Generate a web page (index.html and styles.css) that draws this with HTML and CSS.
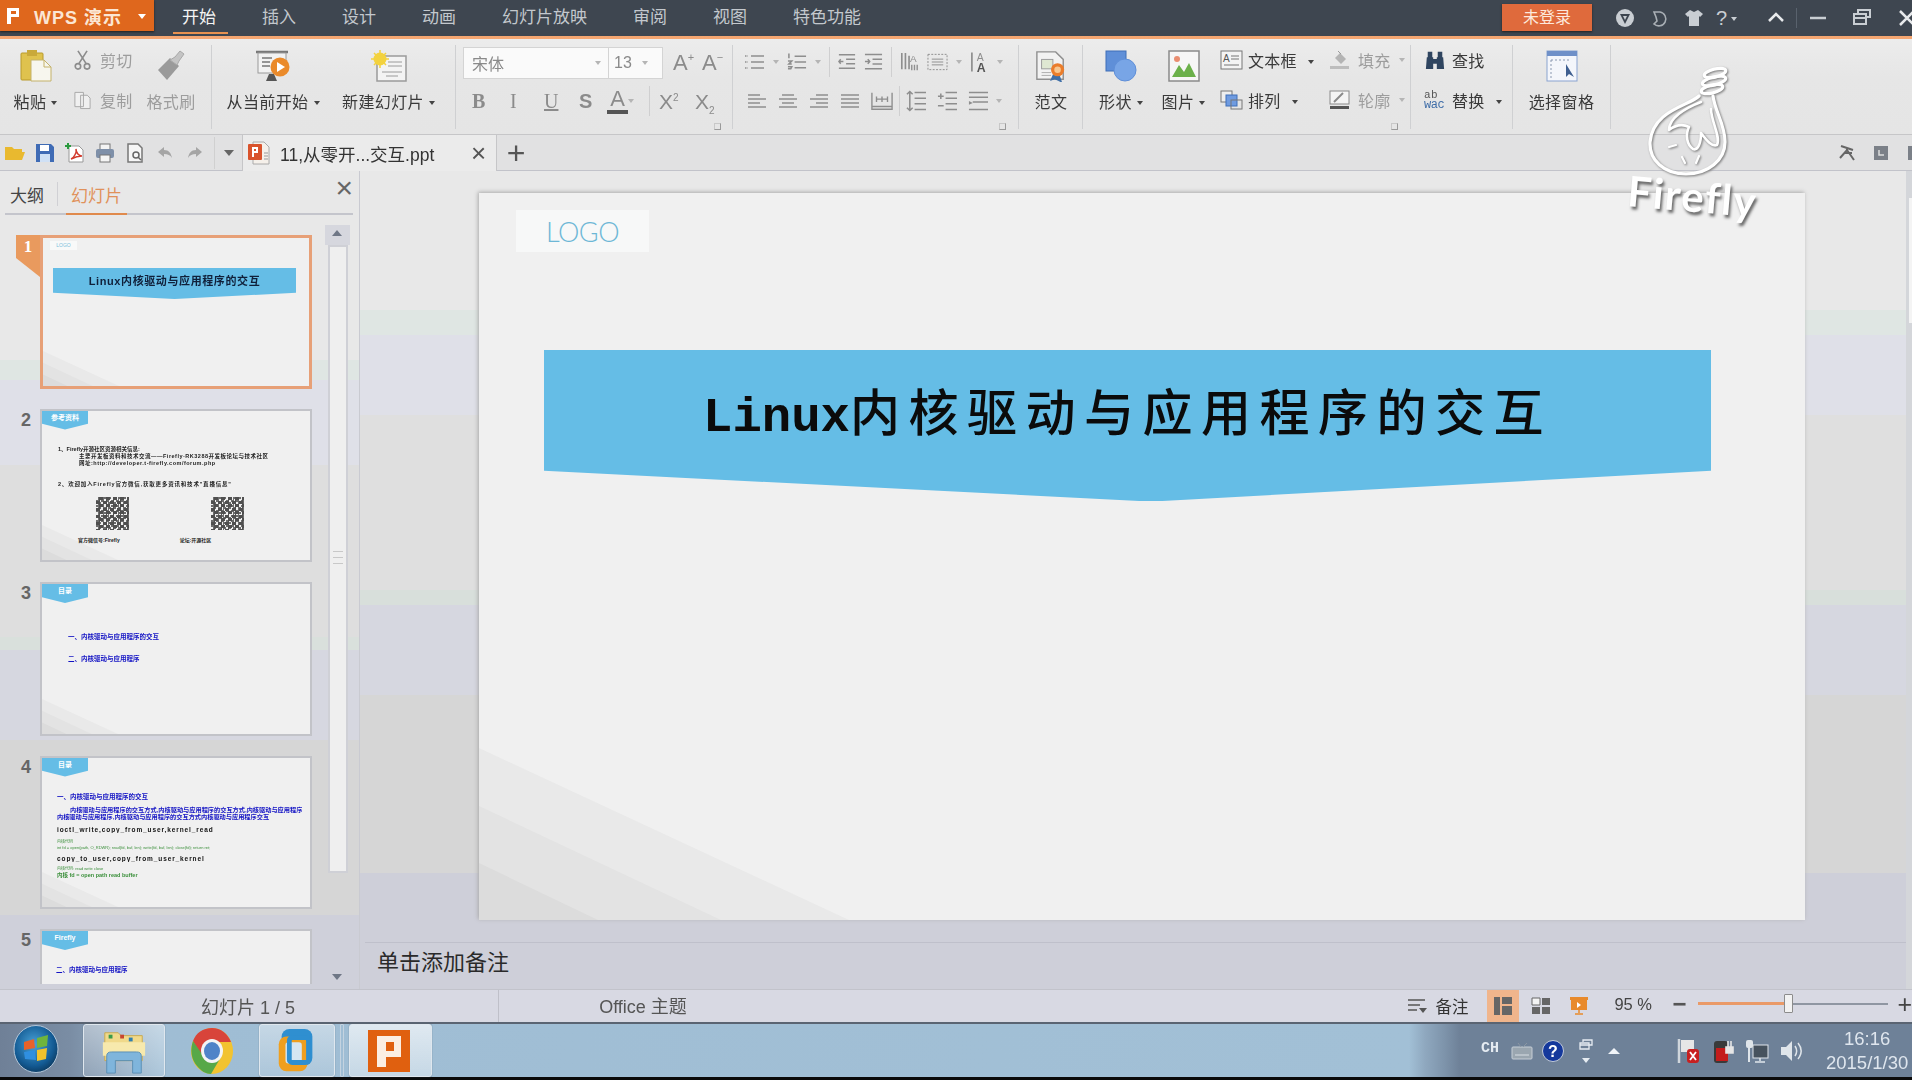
FILE: index.html
```html
<!DOCTYPE html>
<html lang="zh-CN">
<head>
<meta charset="utf-8">
<title>WPS 演示</title>
<link rel="stylesheet" href="styles.css">
</head>
<body>
<svg class="defs" aria-hidden="true">
  <symbol id="list" viewBox="0 0 21 20"><g fill="none" stroke="currentColor" stroke-width="1.6"><path d="M7 4h13M7 10h13M7 16h13"/><path d="M1 4h3M1 10h3M1 16h3" stroke-dasharray="1.5 1"/></g></symbol>
  <symbol id="num" viewBox="0 0 21 20"><g fill="none" stroke="currentColor" stroke-width="1.6"><path d="M8 4h12M8 10h12M8 16h12M2 1v5M1 9h4l-3 3h3M1 15h4l-1 2h-3"/></g></symbol>
  <symbol id="outd" viewBox="0 0 20 20"><path d="M1 2h18M9 7h10M9 12h10M1 17h18M1 9.500h5M3 7l-2 2.500 2 2.500" fill="none" stroke="currentColor" stroke-width="1.6"/></symbol>
  <symbol id="ind" viewBox="0 0 20 20"><path d="M1 2h18M9 7h10M9 12h10M1 17h18M1 9.500h5M4 7l2 2.500-2 2.500" fill="none" stroke="currentColor" stroke-width="1.6"/></symbol>
  <symbol id="box" viewBox="0 0 22 20"><rect x="1" y="2" width="20" height="16" fill="none" stroke="currentColor" stroke-dasharray="2 1.500"/><path d="M5 7h12M5 10h12M5 13h12" stroke="currentColor"/></symbol>
  <symbol id="al" viewBox="0 0 20 16"><path d="M1 2h12M1 6h18M1 10h12M1 14h18" stroke="currentColor" stroke-width="1.6"/></symbol>
  <symbol id="ac" viewBox="0 0 20 16"><path d="M4 2h12M1 6h18M4 10h12M1 14h18" stroke="currentColor" stroke-width="1.6"/></symbol>
  <symbol id="ar" viewBox="0 0 20 16"><path d="M7 2h12M1 6h18M7 10h12M1 14h18" stroke="currentColor" stroke-width="1.6"/></symbol>
  <symbol id="aj" viewBox="0 0 20 16"><path d="M1 2h18M1 6h18M1 10h18M1 14h18" stroke="currentColor" stroke-width="1.6"/></symbol>
  <symbol id="ad" viewBox="0 0 24 20"><path d="M1 1v18h22V1M1 16h22M6 8h12M6 5v6M12 5v6M18 5v6" fill="none" stroke="currentColor" stroke-width="1.5"/></symbol>
  <symbol id="ls" viewBox="0 0 21 24"><path d="M9 3h12M9 9h12M9 15h12M9 21h12M4 2v20M1 5l3-3 3 3M1 19l3 3 3-3" fill="none" stroke="currentColor" stroke-width="1.6"/></symbol>
  <symbol id="ls2" viewBox="0 0 21 24"><path d="M9 3h12M9 9h12M9 15h12M9 21h12M1 7h6M4 4v6M1 17h6" fill="none" stroke="currentColor" stroke-width="1.6"/></symbol>
  <symbol id="ls3" viewBox="0 0 21 24"><path d="M1 3h20M1 8h20M5 13h16M1 21h20" fill="none" stroke="currentColor" stroke-width="1.6"/><path d="M1 12l4 2-4 2z" fill="currentColor"/></symbol>
  <symbol id="deco" viewBox="0 0 370 172" preserveAspectRatio="none"><path d="M0 0L370 172H0z" fill="#e9e9e9"/><path d="M0 58L242 172H0z" fill="#e3e3e3"/><path d="M0 115L119 172H0z" fill="#dcdcdc"/></symbol>
</svg>

<div class="page">
  <header class="titlebar">
    <div class="app"><svg class="app-p" viewBox="0 0 14 18"><path d="M1 1h12v9H5v7H1zM5 4v3h5V4z" fill="#fff"/></svg><span class="app-name">WPS 演示</span><span class="app-arrow"></span></div>
    <nav class="tabs">
      <span class="tab on">开始</span><span class="tab">插入</span><span class="tab">设计</span><span class="tab">动画</span><span class="tab">幻灯片放映</span><span class="tab">审阅</span><span class="tab">视图</span><span class="tab">特色功能</span>
    </nav>
    <div class="win">
      <span class="login">未登录</span>
      <svg class="wi w1" viewBox="0 0 20 20"><circle cx="10" cy="10" r="9" fill="#c9ced3"/><path d="M5 6h10l-5 10z" fill="#3e4650"/><path d="M8 8h4l-2 4z" fill="#c9ced3"/></svg>
      <svg class="wi w2" viewBox="0 0 20 20"><path d="M4 4h6a7 7 0 1 1-6 12l3-3-1-4z" fill="none" stroke="#a9afb5" stroke-width="1.600"/></svg>
      <svg class="wi w3" viewBox="0 0 20 20"><path d="M6 2l4 2 4-2 5 4-3 3-1-1v10H5V8L4 9 1 6z" fill="#c9ced3"/></svg>
      <span class="wq">?<i class="dn-w"></i></span>
      <svg class="wi w4" viewBox="0 0 20 20"><path d="M3 13l7-7 7 7" fill="none" stroke="#e8eaec" stroke-width="2.500"/></svg>
      <i class="wsep"></i>
      <svg class="wi w5" viewBox="0 0 20 20"><path d="M2 10h16" stroke="#c9ced3" stroke-width="2.500"/></svg>
      <svg class="wi w6" viewBox="0 0 20 20"><path d="M6 5V2h12v7h-4M2 6h12v10H2zM2 10h12" fill="none" stroke="#c9ced3" stroke-width="2"/></svg>
      <svg class="wi w7" viewBox="0 0 20 20"><path d="M3 3l14 14M17 3L3 17" stroke="#e8eaec" stroke-width="2.500"/></svg>
    </div>
  </header>

  <section class="ribbon">
    <div class="rg g1">
      <div class="big paste">
        <svg class="bi" viewBox="0 0 32 32"><rect x="1" y="3" width="22" height="27" rx="1" fill="#dfc24e" stroke="#b99a2b"/><rect x="7" y="0" width="10" height="6" fill="#c9a93a"/><path d="M11 10h13l7 7v14H11z" fill="#f7f6ee" stroke="#c4b26a"/><path d="M24 10v7h7" fill="none" stroke="#c4b26a"/></svg>
        <span class="lb">粘贴<i class="dn"></i></span>
      </div>
      <div class="stack cut">
        <span class="sm off"><svg class="si" viewBox="0 0 20 22"><path d="M5 1l9 14M15 1L6 15" stroke="#8c8c8c" stroke-width="1.800"/><circle cx="5" cy="18" r="3" fill="none" stroke="#8c8c8c" stroke-width="1.800"/><circle cx="15" cy="18" r="3" fill="none" stroke="#8c8c8c" stroke-width="1.800"/></svg>剪切</span>
        <span class="sm off"><svg class="si" viewBox="0 0 20 20"><path d="M2 2h9v15H2zM8 5h7l3 3v11H8z" fill="#f0f0f0" stroke="#a8a8a8"/></svg>复制</span>
      </div>
      <div class="big brush off">
        <svg class="bi" viewBox="0 0 32 32"><path d="M3 20l12-12 9 8-12 14z" fill="#9a9a9a"/><path d="M15 10l5-3 5-6 4 3-5 7-2 4z" fill="#c4c4c4" stroke="#a8a8a8"/></svg>
        <span class="lb">格式刷</span>
      </div>
    </div>

    <div class="rg g2">
      <div class="big w96">
        <svg class="bi wide" viewBox="0 0 36 32"><path d="M1 2h32" stroke="#777" stroke-width="2.500"/><rect x="3" y="3" width="28" height="20" fill="#f2f2f2" stroke="#9a9a9a"/><path d="M7 8h10M7 12h8M7 16h8" stroke="#777" stroke-width="1.500"/><path d="M14 24l-3 7h11l-3-7z" fill="#555"/><circle cx="25" cy="17" r="9.500" fill="#ea8a2a"/><path d="M22 12l8 5-8 5z" fill="#fff"/></svg>
        <span class="lb">从当前开始<i class="dn"></i></span>
      </div>
      <div class="big w99">
        <svg class="bi wide" viewBox="0 0 36 32"><rect x="6" y="6" width="29" height="25" fill="#f3f3f3" stroke="#9a9a9a" stroke-width="1.500"/><path d="M17 12h14M17 16h14M11 22h20M15 26h12" stroke="#9a9a9a"/><circle cx="9" cy="9" r="6.500" fill="#f3d23e"/><path d="M9 0v18M0 9h18M3 3l12 12M15 3L3 15" stroke="#f3d23e" stroke-width="1.500"/></svg>
        <span class="lb">新建幻灯片<i class="dn"></i></span>
      </div>
    </div>

    <div class="rg g3">
      <div class="frow r1">
        <div class="fontbox"><span class="fname">宋体</span><i class="dn lite a1"></i><span class="fsize">13</span><i class="dn lite a2"></i></div>
        <span class="aa a-up">A<sup>+</sup></span><span class="aa a-dn">A<sup>−</sup></span>
      </div>
      <div class="frow r2">
        <b class="fb s-b">B</b><i class="fb s-i">I</i><u class="fb s-u">U</u><span class="fb s-s">S</span>
        <span class="fb s-a">A</span><i class="dn lite a3"></i><i class="vs v1"></i>
        <span class="xx x1">X<sup>2</sup></span><span class="xx">X<sub>2</sub></span>
      </div>
      <i class="launch"></i>
    </div>

    <div class="rg g4">
      <div class="tools t1">
        <svg class="ti w21"><use href="#list"/></svg><i class="dn lite"></i>
        <svg class="ti w20"><use href="#num"/></svg><i class="dn lite"></i><i class="vs"></i>
        <svg class="ti w18"><use href="#outd"/></svg><svg class="ti w19"><use href="#ind"/></svg><i class="vs"></i>
        <svg class="ti w19" viewBox="0 0 21 22"><path d="M2 1v18M6 1v18M10 4v15" fill="none" stroke="currentColor" stroke-width="1.800"/><text x="11" y="11" class="svgt">A</text><path d="M13 14v6M16 14v6M19 14v6" fill="none" stroke="currentColor" stroke-width="1.500"/></svg><svg class="ti w21"><use href="#box"/></svg><i class="dn lite"></i>
        <svg class="ti w19 h24" viewBox="0 0 20 24"><path d="M2 2v20" stroke="currentColor" stroke-width="1.800"/><text x="7" y="11" class="svgt">A</text><text x="7" y="23" class="svgb">A</text></svg><i class="dn lite"></i>
      </div>
      <div class="tools t2">
        <svg class="ti w20 h16"><use href="#al"/></svg><svg class="ti w20 h16"><use href="#ac"/></svg><svg class="ti w20 h16"><use href="#ar"/></svg><svg class="ti w20 h16"><use href="#aj"/></svg><svg class="ti w22"><use href="#ad"/></svg>
        <i class="vs tight"></i>
        <svg class="ti w20 h24 tight"><use href="#ls"/></svg><svg class="ti w20 h24"><use href="#ls2"/></svg><svg class="ti w20 h24"><use href="#ls3"/></svg><i class="dn lite"></i>
      </div>
      <i class="launch"></i>
    </div>

    <div class="rg g5">
      <div class="big w64">
        <svg class="bi" viewBox="0 0 32 34"><path d="M1 2h20l8 8v21H1z" fill="#f2f2f2" stroke="#8f8f8f" stroke-width="1.500"/><rect x="6" y="10" width="12" height="10" fill="#dfe8d2" stroke="#9a9a9a"/><path d="M6 24h10M6 27h10" stroke="#aaa"/><path d="M18 26l-3 7 5-2 4 2 4 2-3-9z" fill="#3f6fa8"/><circle cx="23" cy="21" r="7" fill="#ea7d2b"/><circle cx="23" cy="21" r="3.500" fill="#f7c78f"/></svg>
        <span class="lb">范文</span>
      </div>
    </div>

    <div class="rg g6">
      <div class="big w48">
        <svg class="bi" viewBox="0 0 32 32"><rect x="1" y="1" width="20" height="20" fill="#5f8fd8" stroke="#3f6fb8"/><circle cx="20" cy="20" r="11" fill="#78a5e6" stroke="#5f8fd8"/></svg>
        <span class="lb">形状<i class="dn"></i></span>
      </div>
      <div class="big w49">
        <svg class="bi" viewBox="0 0 32 32"><rect x="1" y="1" width="30" height="30" fill="#f6f6f6" stroke="#8a8a8a" stroke-width="1.500"/><circle cx="9" cy="9" r="3" fill="#e98d70"/><path d="M4 27l7-12 5 7 5-9 7 14z" fill="#6bb04a"/></svg>
        <span class="lb">图片<i class="dn"></i></span>
      </div>
      <div class="stack c95">
        <span class="sm g5px"><svg class="si s23" viewBox="0 0 23 20"><rect x="1" y="1" width="21" height="18" fill="#f4f4f4" stroke="#777"/><text x="3" y="12" class="svgs">A</text><path d="M11 6h8M11 9h8M4 15h15" stroke="#777"/></svg>文本框<i class="dn arrow10"></i></span>
        <span class="sm g5px"><svg class="si s23" viewBox="0 0 23 20"><rect x="1" y="1" width="11" height="11" fill="#eee" stroke="#777"/><rect x="6" y="5" width="11" height="11" fill="#6f9be0" stroke="#3f6fb8"/><rect x="11" y="10" width="11" height="9" fill="none" stroke="#777"/></svg>排列<i class="dn arrow10"></i></span>
      </div>
      <div class="stack off">
        <span class="sm g8px"><svg class="si s21" viewBox="0 0 21 20"><path d="M6 8l5-5 6 6-5 5z" fill="#b4b4b4"/><path d="M9 1l3 3" stroke="#999"/><rect x="1" y="16" width="19" height="3" fill="#bdbdbd"/></svg>填充<i class="dn lite arrow10"></i></span>
        <span class="sm g8px"><svg class="si s21" viewBox="0 0 21 20"><rect x="1" y="1" width="19" height="13" fill="#f4f4f4" stroke="#8a8a8a"/><path d="M5 12l9-9" stroke="#8a8a8a" stroke-width="2"/><rect x="1" y="16" width="19" height="3" fill="#555"/></svg>轮廓<i class="dn lite arrow10"></i></span>
      </div>
      <i class="launch"></i>
    </div>

    <div class="rg g7">
      <div class="stack">
        <span class="sm g6px"><svg class="si s22" viewBox="0 0 22 22"><path d="M2 8h7v13H1zM13 8h7l1 13h-8zM3 2h5v6H3zM14 2h5v6h-5zM9 10h4v5H9z" fill="#2f4560"/></svg>查找</span>
        <span class="sm g6px"><span class="abwac"><span class="ab">ab</span><span class="wac">wac</span></span>替换<i class="dn"></i></span>
      </div>
    </div>

    <div class="rg g8">
      <div class="big w69">
        <svg class="bi" viewBox="0 0 32 32"><rect x="1" y="1" width="30" height="30" fill="#f4f6fb" stroke="#8aa3d0"/><rect x="1" y="1" width="30" height="5" fill="#6f90c8"/><path d="M5 10h20M5 10v18" stroke="#8a98b0" stroke-dasharray="2 2"/><path d="M20 14v13l3-3 5 3z" fill="#3f5f90"/></svg>
        <span class="lb">选择窗格</span>
      </div>
    </div>
  </section>

  <section class="quick">
    <div class="qicons">
      <svg class="qi" viewBox="0 0 20 20"><path d="M0 4h7l2 2h8v3H0zM0 9h20l-3 8H0z" fill="#e9b92f"/></svg>
      <svg class="qi" viewBox="0 0 20 20"><path d="M1 1h15l3 3v15H1z" fill="#3f6bb5"/><rect x="5" y="2" width="9" height="6" fill="#fff"/><rect x="5" y="11" width="10" height="8" fill="#cfe0f5"/></svg>
      <svg class="qi" viewBox="0 0 20 20"><path d="M4 3h10l4 4v12H4z" fill="#fff" stroke="#999"/><path d="M6 16c3-1 6-7 5-10 0 4 3 7 6 7-4 0-7 1-11 3z" fill="none" stroke="#d23b2e" stroke-width="1.500"/><path d="M3 0v6M0 3h6" stroke="#2a9a3e" stroke-width="2"/></svg>
      <svg class="qi" viewBox="0 0 20 20"><rect x="5" y="1" width="10" height="6" fill="#f4f4f4" stroke="#777"/><rect x="1" y="6" width="18" height="9" rx="2" fill="#7e8fa8"/><rect x="5" y="12" width="10" height="7" fill="#f4f4f4" stroke="#777"/></svg>
      <svg class="qi" viewBox="0 0 20 20"><path d="M3 1h10l4 4v14H3z" fill="#f6f6f6" stroke="#777" stroke-width="1.500"/><circle cx="11" cy="12" r="3" fill="none" stroke="#666" stroke-width="1.500"/><path d="M13 14l3 3" stroke="#666" stroke-width="1.500"/></svg>
      <svg class="qi" viewBox="0 0 20 20"><path d="M9 4L3 9l6 5v-3c4 0 6 1 8 4-1-5-3-8-8-8z" fill="#a5a5a5"/></svg>
      <svg class="qi" viewBox="0 0 20 20"><path d="M11 4l6 5-6 5v-3c-4 0-6 1-8 4 1-5 3-8 8-8z" fill="#a5a5a5"/></svg>
    </div>
    <i class="qsep"></i>
    <i class="dn dark qdrop"></i>
    <div class="doc">
      <svg class="docic" viewBox="0 0 22 24"><path d="M5 1h11l5 5v17H5z" fill="#f5f0ea" stroke="#aaa"/><rect x="0" y="3" width="14" height="16" rx="1" fill="#d9532c"/><path d="M4 6h6v6H6v4H4zM6 8v2h2V8z" fill="#fff"/><path d="M16 12h4M16 15h4M16 18h4" stroke="#999"/></svg>
      <span class="docname">11,从零开...交互.ppt</span>
      <span class="docx">×</span>
    </div>
    <span class="plus">+</span>
    <div class="qright">
      <svg class="qr" viewBox="0 0 18 18"><path d="M3 2l12 4M9 4v3M2 14l7-8 7 10M6 9h8" fill="none" stroke="#666" stroke-width="2"/></svg>
      <svg class="qr" viewBox="0 0 18 18"><rect x="2" y="2" width="14" height="14" fill="#7b8088"/><path d="M7 6v5h5" fill="none" stroke="#ddd" stroke-width="1.500"/></svg>
      <svg class="qr" viewBox="0 0 18 18"><rect x="2" y="2" width="14" height="14" fill="#7b8088"/></svg>
    </div>
  </section>

  <main class="work">
    <aside class="side">
      <div class="stabs"><span class="st">大纲</span><i class="stsep"></i><span class="st on">幻灯片</span><span class="sclose">×</span></div>
      <div class="sbody">
        <div class="thumbs">
          <div class="item">
            <span class="flag">1</span>
            <div class="thumb active">
              <span class="t-logo">LOGO</span>
              <div class="t-banner"><span>Linux内核驱动与应用程序的交互</span></div>
              <svg class="t-deco"><use href="#deco"/></svg>
            </div>
          </div>
          <div class="item">
            <span class="num">2</span>
            <div class="thumb">
              <span class="t-tag">参考资料</span>
              <p class="t-k k2a">1、Firefly开源社区资源相关信息:</p>
              <p class="t-k k2b">主要开发板资料和技术交流——Firefly-RK3288开发板论坛与技术社区</p>
              <p class="t-k k2b">网址:http://developer.t-firefly.com/forum.php</p>
              <p class="t-k k2c">2、欢迎加入Firefly官方微信,获取更多资讯和技术"直播信息"</p>
              <div class="qrs"><i class="qrc"></i><i class="qrc"></i></div>
              <div class="caps"><span>官方微信号:Firefly</span><span>论坛:开源社区</span></div>
              <svg class="t-deco"><use href="#deco"/></svg>
            </div>
          </div>
          <div class="item">
            <span class="num">3</span>
            <div class="thumb">
              <span class="t-tag">目录</span>
              <p class="t-b b3a">一、内核驱动与应用程序的交互</p>
              <p class="t-b b3b">二、内核驱动与应用程序</p>
              <svg class="t-deco"><use href="#deco"/></svg>
            </div>
          </div>
          <div class="item">
            <span class="num">4</span>
            <div class="thumb">
              <span class="t-tag">目录</span>
              <p class="t-b b4a">一、内核驱动与应用程序的交互</p>
              <p class="t-b b4b">内核驱动与应用程序的交互方式,内核驱动与应用程序的交互方式,内核驱动与应用程序</p>
              <p class="t-b b4c">内核驱动与应用程序,内核驱动与应用程序的交互方式内核驱动与应用程序交互</p>
              <p class="t-d b4d">ioctl_write,copy_from_user,kernel_read</p>
              <p class="t-g b4e">内核代码</p>
              <p class="t-g b4f">int fd = open(path, O_RDWR); read(fd, buf, len); write(fd, buf, len); close(fd); return ret;</p>
              <p class="t-d b4g">copy_to_user,copy_from_user_kernel</p>
              <p class="t-g b4f">内核代码: read write close</p>
              <p class="t-g b4h">内核 fd = open path read buffer</p>
              <svg class="t-deco"><use href="#deco"/></svg>
            </div>
          </div>
          <div class="item">
            <span class="num">5</span>
            <div class="thumb">
              <span class="t-tag">Firefly</span>
              <p class="t-b b5a">二、内核驱动与应用程序</p>
              <svg class="t-deco"><use href="#deco"/></svg>
            </div>
          </div>
        </div>
        <div class="vscroll">
          <i class="sc-up"></i>
          <div class="sc-thumb"><i class="grip"></i></div>
          <i class="sc-dn"></i>
        </div>
      </div>
    </aside>

    <div class="center">
      <div class="canvas">
        <article class="slide">
          <div class="logo"><span>LOGO</span></div>
          <div class="banner"><h1 class="headline"><span class="lat">Linux</span><span class="cjk">内核驱动与应用程序的交互</span></h1></div>
          <svg class="deco"><use href="#deco"/></svg>
        </article>
      </div>
      <div class="notes">单击添加备注</div>
    </div>

    <div class="rscroll"><i class="rthumb"></i></div>
  </main>

  <footer class="status">
    <span class="s-page">幻灯片 1 / 5</span>
    <span class="s-theme">Office 主题</span>
    <div class="s-right">
      <svg class="s-note" viewBox="0 0 20 18"><path d="M1 3h17M1 8h12M1 13h9" stroke="#555" stroke-width="1.500"/><path d="M12 11h8l-4 5z" fill="#555"/></svg>
      <span class="s-nt">备注</span>
      <span class="vbtn on"><svg viewBox="0 0 20 20"><path d="M1 1h6v18H1zM9 1h10v7H9zM9 10h10v9H9z" fill="#666"/></svg></span>
      <span class="vbtn"><svg viewBox="0 0 20 20"><path d="M1 2h8v7H1z" fill="#f4f4f4" stroke="#666"/><path d="M11 2h8v7h-8zM1 11h8v7H1zM11 11h8v7h-8z" fill="#666"/></svg></span>
      <span class="vbtn"><svg viewBox="0 0 20 20"><path d="M1 1h18v3h-1v10H2V4H1z" fill="#e88a2c"/><path d="M8 6l4 3-4 3z" fill="#fff"/><path d="M10 14v3M6 18h8" stroke="#e88a2c" stroke-width="1.500"/></svg></span>
      <span class="zoomv">95 %</span>
      <span class="zm">−</span>
      <div class="slider"><i class="fill"></i><i class="handle"></i></div>
      <span class="zp">+</span>
    </div>
  </footer>

  <div class="taskbar">
    <div class="orb"><svg viewBox="0 0 46 48"><defs><radialGradient id="og" cx=".45" cy=".4" r=".65"><stop offset="0" stop-color="#4aa3d8"/><stop offset=".7" stop-color="#135a93"/><stop offset="1" stop-color="#0b3558"/></radialGradient></defs><ellipse cx="23" cy="24" rx="22" ry="23.500" fill="url(#og)" stroke="#b4c6d8"/><path d="M11 17l10-3 1 9-11 2z" fill="#e8622a"/><path d="M24 13l11-3-1 11-10 2z" fill="#6fb53c"/><path d="M11 27l11-2 1 10-11-1z" fill="#2f8fe0"/><path d="M24 25l10-2-1 11-9 2z" fill="#f2c22c"/></svg></div>
    <div class="tb-btn open b-folder"><svg viewBox="0 0 46 50"><path d="M3 6h14l3 3h22v26H3z" fill="#f0d98a" stroke="#c8a94e"/><path d="M7 8h4v4H7z" fill="#3a9a4a"/><path d="M19 8h4v4h-4z" fill="#c8452e"/><path d="M28 11h4v4h-4z" fill="#2f7fb0"/><path d="M1 16h44v14H1z" fill="#f7e9ad"/><path d="M5 48V30c0-3 2-4 5-4h26c3 0 5 1 5 4v18h-9V35H14v13z" fill="#7fb5dc" stroke="#5a8fb5"/></svg></div>
    <div class="tb-btn b-chrome"><svg viewBox="0 0 44 48"><ellipse cx="22" cy="24" rx="21" ry="23" fill="#f2c330"/><path d="M22 1C13 1 6 6 3 14l10 18 9-17h19C38 7 31 1 22 1z" fill="#d8443a"/><path d="M3 14c-3 9-2 18 4 25 4 5 9 8 14 8l10-17-9 3c-5 0-8-2-10-6z" fill="#57a848"/><ellipse cx="22" cy="24" rx="11" ry="12" fill="#f4f4f4"/><ellipse cx="22" cy="24" rx="8" ry="9" fill="#4f83c8"/></svg></div>
    <div class="tb-btn open b-vm"><svg viewBox="0 0 40 50"><rect x="4" y="2" width="32" height="38" rx="8" fill="#2f8fd0"/><rect x="1" y="10" width="30" height="36" rx="8" fill="#ef9f1f"/><rect x="8" y="16" width="17" height="22" rx="3" fill="#d6e6f2"/><rect x="12" y="11" width="20" height="26" rx="3" fill="none" stroke="#2f8fd0" stroke-width="5"/></svg></div>
    <i class="tb-sep"></i>
    <div class="tb-btn open b-wps"><svg viewBox="0 0 42 42"><rect width="42" height="42" fill="#e0600f"/><path d="M9 6h24v21H18v10H9zM18 12v9h8v-9z" fill="#fbeee2"/></svg></div>
    <div class="tray">
      <span class="ch">CH</span>
      <svg class="tri t-kb" viewBox="0 0 22 20"><rect x="1" y="6" width="20" height="12" rx="1" fill="#9aa6b0" stroke="#c6ced6"/><path d="M4 14h14" stroke="#d8dee4"/><path d="M10 6l-3-4M12 6l4-4" stroke="#8a96a2"/></svg>
      <svg class="tri t-help" viewBox="0 0 22 22"><circle cx="11" cy="11" r="10.500" fill="#14389c" stroke="#c4ccd8"/><text x="11" y="17" class="svgq">?</text></svg>
      <span class="t-switch"><svg viewBox="0 0 14 12"><path d="M4 3V1h9v5h-3M1 4h9v6H1zM1 6h9" fill="none" stroke="#e6ecf2" stroke-width="1.300"/></svg><i class="t-dn"></i></span>
      <i class="t-up"></i>
      <svg class="tri t-flag" viewBox="0 0 24 26"><path d="M3 1v24" stroke="#d0d6dc" stroke-width="2.500"/><path d="M5 2h13v12H5z" fill="#e6e6e6"/><rect x="11" y="11" width="12" height="14" rx="3" fill="#c82020"/><path d="M14 14l6 8M20 14l-6 8" stroke="#fff" stroke-width="1.800"/></svg>
      <svg class="tri t-plug" viewBox="0 0 22 26"><rect x="2" y="3" width="14" height="22" rx="3" fill="#3a3a3a"/><rect x="4" y="10" width="12" height="13" fill="#c41c1c"/><path d="M14 9h7v6h-7zM16 3v6M19 3v6" stroke="#e6e6e6" stroke-width="1.600" fill="#e6e6e6"/></svg>
      <svg class="tri t-net" viewBox="0 0 24 26"><rect x="8" y="7" width="15" height="13" fill="#46525e" stroke="#e0e6ec"/><path d="M15 20v3M10 24h10" stroke="#e0e6ec" stroke-width="1.500"/><rect x="1" y="2" width="7" height="8" rx="2" fill="#dfe5ea"/><path d="M4 10v14" stroke="#dfe5ea" stroke-width="2"/></svg>
      <svg class="tri t-vol" viewBox="0 0 22 24"><path d="M1 8h5l6-6v20l-6-6H1z" fill="#dfe5ea"/><path d="M15 7c2 3 2 7 0 10M18 4c4 5 4 11 0 16" fill="none" stroke="#dfe5ea" stroke-width="1.500"/></svg>
      <div class="clock"><span>16:16</span><span>2015/1/30</span></div>
    </div>
  </div>

  <div class="firefly">
    <svg class="bulb" viewBox="0 0 140 120"><g fill="none" stroke="#fff" stroke-width="3.200" stroke-linecap="round" stroke-linejoin="round"><ellipse cx="90" cy="13" rx="11" ry="4" transform="rotate(-14 90 13)"/><ellipse cx="89" cy="21" rx="12" ry="4" transform="rotate(-14 89 21)"/><ellipse cx="87" cy="29" rx="11" ry="4" transform="rotate(-14 87 29)"/><path d="M74 36C64 46 28 50 25 82c-1 18 14 32 36 32 22 0 39-14 39-32 0-18-10-30-12-46"/><path d="M76 42c-16 6-32 16-32 28 8-6 14-6 20-3-4 8-2 18 4 22 5 2 8-6 8-16 6 8 11 14 16 12 4-8-6-24-6-36" stroke-width="2.600"/><path d="M44 87l7-2M57 97l3 6M74 96l-3 7" stroke-width="2.200"/></g></svg>
    <span class="ff-text">Firefly</span>
  </div>
</div>
</body>
</html>
```

FILE: styles.css
```css
* { box-sizing: border-box; }
html, body { margin: 0; padding: 0; background: #e6e6e6; }
body { width: 1912px; height: 1080px; overflow: hidden; font-family: "Liberation Sans", "Noto Sans CJK SC", sans-serif; color: #3a3a3a; }
p { margin: 0; }
i { font-style: normal; }
.defs { position: absolute; width: 0; height: 0; }
.svgt { font: 11px "Liberation Sans", sans-serif; fill: currentColor; }
.svgb { font: bold 13px "Liberation Sans", sans-serif; fill: #555; }
.svgs { font: 10px "Liberation Sans", sans-serif; fill: #555; }
.svgq { font: bold 16px "Liberation Sans", sans-serif; fill: #fff; text-anchor: middle; }

.page { position: relative; width: 1912px; height: 1080px; display: flex; flex-direction: column; overflow: hidden; filter: blur(.45px); }

/* title bar */
.titlebar { flex: 0 0 39px; display: flex; background: #3e4650; border-bottom: 3px solid; border-image: linear-gradient(#c9743c, #f6a772) 1; }
.app { width: 154px; height: 31px; background: #df671d; display: flex; align-items: center; padding-left: 6px; color: #fff; box-shadow: 0 1px 2px #222; flex: none; }
.app-p { width: 14px; height: 18px; }
.app-name { margin-left: 14px; font-size: 18px; font-weight: bold; color: #fbe6d4; letter-spacing: 1px; white-space: nowrap; }
.app-arrow { margin-left: 16px; border: 4px solid transparent; border-top: 5px solid #fff; margin-top: 5px; }
.tabs { display: flex; gap: 46px; padding-left: 28px; font-size: 17px; color: #c3c8cd; height: 36px; }
.tab { line-height: 36px; position: relative; white-space: nowrap; }
.tab.on { color: #f4f4f4; }
.tab.on::after { content: ""; position: absolute; left: -9px; right: -12px; bottom: 2px; height: 2px; background: #e8914f; }
.win { margin-left: auto; display: flex; align-items: center; height: 36px; width: 410px; flex: none; }
.login { width: 90px; height: 27px; background: #df6a3c; color: #fde9dc; font-size: 16px; text-align: center; line-height: 27px; box-shadow: 0 1px 2px #222; margin-bottom: 1px; flex: none; }
.wi { width: 20px; height: 20px; flex: none; }
.w1 { margin-left: 23px; }
.w2 { margin-left: 15px; }
.w3 { margin-left: 14px; }
.wq { margin-left: 12px; width: 24px; color: #c9ced3; font-size: 20px; display: flex; align-items: center; flex: none; }
.dn-w { margin-left: 4px; border: 3.500px solid transparent; border-top: 4px solid #c9ced3; margin-top: 5px; }
.w4 { margin-left: 26px; }
.wsep { margin-left: 10px; width: 1px; height: 20px; background: #59626d; flex: none; }
.w5 { margin-left: 11px; }
.w6 { margin-left: 24px; }
.w7 { margin-left: 25px; }

/* ribbon */
.ribbon { flex: 0 0 95px; display: flex; background: linear-gradient(#ececec, #e6e6e6 40%, #e5e5e5); }
.rg { position: relative; display: flex; height: 95px; padding-bottom: 6px; flex: none; }
.rg::after { content: ""; position: absolute; right: 0; top: 6px; bottom: 5px; width: 1px; background: #cfd0d2; }
.g1 { width: 212px; padding-left: 11px; }
.g2 { width: 244px; padding-left: 13px; gap: 18px; }
.g3 { width: 277px; flex-direction: column; padding-left: 7px; }
.g4 { width: 286px; flex-direction: column; }
.g5 { width: 64px; }
.g6 { width: 328px; padding-left: 14px; gap: 14px; }
.g7 { width: 102px; padding-left: 13px; }
.g8 { width: 98px; padding-left: 14px; }

.big { display: grid; grid-template-rows: 43px 38px; justify-items: center; align-items: end; font-size: 16px; }
.bi { width: 32px; height: 32px; display: block; }
.bi.wide { width: 36px; }
.lb { display: flex; align-items: center; height: 38px; white-space: nowrap; letter-spacing: .4px; }
.paste { width: 49px; }
.brush { width: 50px; margin-left: 12px; }
.off { color: #9d9d9d; }
.w96 { width: 96px; } .w99 { width: 99px; } .w64 { width: 64px; } .w48 { width: 48px; } .w49 { width: 49px; } .w69 { width: 69px; }
.g6 .stack.c95 { width: 95px; margin-left: -2px; }
.stack { display: grid; grid-template-rows: 41px 40px; font-size: 16px; align-items: center; }
.cut { margin-left: 13px; width: 61px; }
.sm { display: flex; align-items: center; gap: 8px; white-space: nowrap; letter-spacing: .3px; }
.si { width: 19px; height: 20px; flex: none; }
.s23 { width: 23px; } .s21 { width: 21px; } .s22 { width: 22px; }
.g5px { gap: 5px; } .g8px { gap: 8px; } .g6px { gap: 6px; }
.dn { display: inline-block; margin-left: 5px; margin-top: 4px; border: 3.500px solid transparent; border-top: 4px solid #444; border-bottom: 0; flex: none; }
.dn.lite { border-top-color: #b5b5b5; margin-left: 0; margin-top: 0; }
.arrow10 { margin-left: 6px; }
.abwac { display: flex; flex-direction: column; width: 22px; font: 11px/10px "Liberation Mono", monospace; color: #555; }
.wac { color: #3f6da8; font-size: 12px; letter-spacing: -.5px; }

.launch { position: absolute; right: 13px; bottom: 4px; width: 7px; height: 7px; border: 1px solid #9a9a9a; border-top-color: #c8c8c8; border-left-color: #c8c8c8; }
.g3 .launch { right: 12px; }

/* font group */
.frow { display: flex; align-items: center; }
.r1 { height: 43px; padding-top: 5px; }
.r2 { height: 38px; color: #8b8b8b; font-size: 18px; }
.fontbox { width: 200px; height: 32px; background: #fafafa; border: 1px solid #d4d4d4; display: flex; align-items: center; font-size: 16px; color: #8a8a8a; flex: none; }
.fname { margin-left: 8px; width: 123px; }
.a1 { margin-right: 4px; }
.fsize { margin-left: 3px; width: 34px; border-left: 1px solid #d4d4d4; line-height: 30px; padding-left: 5px; }
.aa { font-size: 22px; color: #8b8b8b; line-height: 1; }
.aa sup { font-size: 11px; vertical-align: 9px; line-height: 0; }
.a-up { margin-left: 10px; width: 29px; }
.r2 .fb { font-family: "Liberation Serif", serif; font-size: 20px; }
.s-b { margin-left: 9px; width: 38px; }
.s-i { width: 34px; }
.s-u { width: 35px; }
.s-s { width: 28px; font-family: "Liberation Sans", sans-serif !important; font-weight: bold; }
.s-a { width: 21px; font-family: "Liberation Sans", sans-serif !important; font-size: 22px !important; border-bottom: 4px solid #555; line-height: 22px; text-align: center; }
.a3 { margin-left: 3px; }
.vs { width: 1px; height: 30px; background: #cfcfd0; flex: none; }
.v1 { margin-left: 15px; }
.xx { font-size: 21px; color: #8b8b8b; width: 36px; line-height: 1; }
.xx sup, .xx sub { font-size: 10px; line-height: 0; }
.x1 { margin-left: 9px; }

/* paragraph group */
.tools { display: flex; align-items: center; color: #8e8e8e; }
.t1 { height: 43px; gap: 8px; padding-left: 11px; padding-top: 2px; }
.t2 { height: 38px; gap: 11px; padding-left: 14px; }
.ti { height: 20px; flex: none; }
.w18 { width: 18px; } .w19 { width: 19px; } .w20 { width: 20px; } .w21 { width: 21px; } .w22 { width: 22px; }
.h16 { height: 16px; } .h24 { height: 24px; }
.tight { margin-left: -5px; }
.t2 .dn.lite { margin-left: -3px; }

/* quick bar */
.quick { flex: 0 0 37px; display: flex; align-items: center; background: #e1e1e2; border-top: 1px solid #c6c6c8; border-bottom: 1px solid #c2c3ca; position: relative; }
.qicons { display: flex; gap: 10px; padding-left: 5px; }
.qi { width: 20px; height: 20px; }
.qsep { margin-left: 9px; width: 1px; height: 32px; background: #d0d0d0; }
.qdrop { margin-left: 9px; margin-top: 0; border-width: 5px; border-top-width: 6px; border-top-color: #666; }
.dn.dark { border-bottom: 0; }
.doc { margin-left: 8px; width: 255px; height: 36px; margin-bottom: -1px; background: #ebebeb; border-left: 1px solid #c6c6c8; border-right: 1px solid #c6c6c8; display: flex; align-items: center; padding-left: 5px; flex: none; }
.docic { width: 22px; height: 24px; flex: none; }
.docname { margin-left: 10px; width: 191px; font-size: 17.500px; white-space: nowrap; color: #333; flex: none; }
.docx { font-size: 26px; color: #555; font-weight: 300; line-height: 1; }
.plus { margin-left: 9px; font-size: 32px; color: #555; line-height: 1; width: 20px; text-align: center; }
.qright { margin-left: auto; display: flex; gap: 16px; margin-right: -12px; }
.qr { width: 18px; height: 18px; }

/* workspace */
.work { flex: 0 0 818px; display: flex; position: relative; }
.side { width: 360px; flex: none; border-right: 1px solid #c9cad1; display: flex; flex-direction: column;
  background: linear-gradient(#e8e8e8 189px, #dfe6e3 189px 209px, #dfe0e8 209px 294px, #dedede 294px 466px, #d9e0dc 466px 479px, #d6d7e0 479px 569px, #d6d6d6 569px 744px, #cfd0da 744px); }
.stabs { height: 44px; margin: 0 6px 0 5px; border-bottom: 2px solid #c4c5cc; display: flex; align-items: flex-end; font-size: 17px; position: relative; padding-left: 5px; }
.st { height: 34px; line-height: 36px; position: relative; color: #444; white-space: nowrap; }
.st.on { color: #e0915a; margin-left: 13px; }
.st.on::after { content: ""; position: absolute; left: -5px; right: -5px; bottom: -2px; height: 2px; background: #e08a4c; }
.stsep { margin-left: 13px; width: 1px; height: 24px; background: #d0d0d4; margin-bottom: 7px; }
.sclose { position: absolute; right: 0; top: 0; font-size: 30px; line-height: 34px; color: #666; font-weight: 300; }
.sbody { flex: 1; display: flex; min-height: 0; }
.thumbs { width: 325px; height: 769px; overflow: hidden; padding: 20px 0 0 16px; flex: none; }
.item { display: flex; position: relative; height: 153.500px; margin-bottom: 20px; }
.num { width: 24px; flex: none; font-size: 18px; font-weight: bold; color: #666; text-align: center; padding: 1px 4px 0 0; }
.flag { width: 24px; height: 42px; flex: none; background: #e99a5e; color: #fff; font-size: 17px; font-family: "Liberation Serif", serif; font-weight: bold; text-align: center; padding-top: 2px; clip-path: polygon(0 0, 100% 0, 100% 100%, 0 55%); }
.thumb { width: 272px; height: 100%; flex: none; background: #f0f0f0; border: 2px solid #c2c3c8; position: relative; overflow: hidden; }
.thumb.active { border: 3px solid #e7a077; }
.t-deco { position: absolute; left: 0; bottom: 0; width: 76px; height: 35px; }
.t-logo { position: relative; display: block; width: 27px; height: 9px; margin: 3px 0 0 7px; background: #f8f9f9; color: #7cbfdc; font-size: 5px; line-height: 9px; text-align: center; }
.t-banner { height: 31px; margin: 18px 13px 0 10px; background: #65bde6; clip-path: polygon(0 0, 100% 0, 100% 80%, 50% 100%, 0 80%); display: flex; justify-content: center; padding-top: 4px; font-size: 11px; font-weight: bold; color: #10203a; white-space: nowrap; letter-spacing: .6px; filter: blur(.3px); }
.t-tag { position: relative; z-index: 1; display: block; width: 46px; height: 19px; background: #65bde6; color: #fff; font-size: 7px; font-weight: bold; text-align: center; line-height: 14px; clip-path: polygon(0 0, 100% 0, 100% 70%, 50% 100%, 0 70%); }
.t-k, .t-b, .t-d, .t-g { position: relative; z-index: 1; white-space: nowrap; font-weight: bold; overflow: hidden; filter: blur(.35px); }
.t-k { font-size: 5.500px; line-height: 7px; color: #222; }
.k2a { margin: 16px 0 0 16px; }
.k2b { margin-left: 37px; letter-spacing: .5px; }
.k2c { margin: 14px 0 0 16px; letter-spacing: .8px; }
.qrs { display: flex; gap: 82px; margin: 9px 0 0 54px; position: relative; z-index: 1; }
.qrc { width: 33px; height: 33px; background-color: #f0f0f0; background-image: repeating-conic-gradient(#333 0 25%, transparent 0 50%), repeating-conic-gradient(#555 0 25%, transparent 0 50%); background-size: 7px 7px, 5px 5px; opacity: .85; }
.caps { display: flex; gap: 60px; margin: 6px 0 0 36px; font-size: 5px; font-weight: bold; color: #222; position: relative; z-index: 1; white-space: nowrap; }
.t-b { color: #1212c4; font-size: 6.500px; line-height: 7px; }
.b3a { margin: 30px 0 0 26px; }
.b3b { margin: 15px 0 0 26px; }
.b4a { margin: 16px 0 0 15px; }
.b4b { margin: 6px 8px 0 28px; font-size: 6.200px; }
.b4c { margin: 0 8px 0 15px; font-size: 6.200px; }
.t-d { color: #111; font-size: 6.500px; line-height: 7px; letter-spacing: .9px; }
.b4d { margin: 6px 0 0 15px; width: 170px; }
.t-g { color: #3a8f3a; font-size: 4px; line-height: 6px; margin-left: 15px; font-weight: normal; }
.b4e { margin-top: 6px; }
.b4f { width: 230px; }
.b4g { margin: 4px 0 4px 15px; width: 150px; }
.b4h { font-size: 5.500px; font-weight: bold; }
.b5a { margin: 16px 0 0 14px; font-size: 6.500px; }

.vscroll { width: 25px; margin-top: 10px; position: relative; display: flex; flex-direction: column; align-items: center; }
.sc-up { width: 25px; height: 20px; background: #d6d7de; position: relative; flex: none; }
.sc-up::after { content: ""; position: absolute; left: 7px; top: 5px; border: 5px solid transparent; border-bottom: 6px solid #6f7786; border-top: 0; }
.sc-thumb { width: 20px; height: 628px; background: #efefef; border: 2px solid #cfd0d6; position: relative; flex: none; }
.grip { position: absolute; left: 3px; top: 304px; width: 10px; height: 13px; border-top: 1px solid #c8c8c8; border-bottom: 1px solid #c8c8c8; background: linear-gradient(#c8c8c8, #c8c8c8) center / 100% 1px no-repeat; }
.sc-dn { position: absolute; left: 7px; bottom: 9px; border: 5px solid transparent; border-top: 6px solid #6f7786; border-bottom: 0; }

.center { flex: 1; display: flex; flex-direction: column; min-width: 0;
  background: linear-gradient(#e8e8e8 139px, #dfe6e3 139px 164px, #dfe0e8 164px 244px, #dfdfdf 244px 419px, #d8dfdb 419px 434px, #d6d7e0 434px 524px, #d6d6d6 524px 702px, #cecfd9 702px); }
.canvas { height: 772px; flex: none; padding: 22px 0 0 114px; border-bottom: 1px solid #bfc0cb; margin-left: 5px; }
.slide { position: relative; width: 1326px; height: 727px; background: #f0f0f0; box-shadow: -1px -1px 4px #aaa; overflow: hidden; padding: 17px 0 0 37px; }
.logo { width: 133px; height: 42px; background: #f7f8f8; display: flex; align-items: center; justify-content: center; color: #6db7d6; font: 300 27px "Lato", sans-serif; letter-spacing: -.5px; }
.banner { width: 1167px; height: 151px; margin: 98px 0 0 28px; background: #65bde6; clip-path: polygon(0 0, 100% 0, 100% 80%, 53% 100%, 51% 100%, 0 80%); padding: 29px 0 0 159px; }
.headline { margin: 0; font-weight: bold; color: #0b0b0b; white-space: nowrap; line-height: 60px; font-size: 50px; }
.lat { font-family: "Liberation Mono", monospace; font-size: 49px; }
.cjk { font-family: "Noto Sans CJK SC", sans-serif; font-weight: 500; letter-spacing: 8.500px; }
.deco { position: absolute; left: 0; bottom: 0; width: 370px; height: 172px; }
.notes { flex: 1; font-size: 22px; padding-left: 17px; line-height: 40px; color: #2a2a2a; }
.rscroll { width: 6px; flex: none; background: #d4d6da; padding-top: 27px; position: relative; }
.rthumb { display: block; margin-left: 3px; height: 125px; background: #f4f4f4; }

/* status */
.status { flex: 0 0 33px; display: flex; align-items: center; background: #d8d9e3; border-top: 1px solid #c2c3cb; font-size: 18px; color: #555; }
.s-page { margin-left: 201px; width: 299px; white-space: nowrap; }
.s-theme { border-left: 1px solid #bfc0c9; height: 32px; line-height: 34px; padding-left: 100px; width: 386px; white-space: nowrap; }
.s-right { flex: 1; display: flex; align-items: center; height: 32px; margin-top: -1px; font-size: 16.500px; }
.s-note { width: 20px; height: 18px; margin-left: 525px; flex: none; }
.s-nt { margin-left: 8px; width: 34px; color: #333; white-space: nowrap; }
.vbtn { width: 32px; height: 32px; display: flex; align-items: center; justify-content: center; flex: none; }
.vbtn svg { width: 20px; height: 20px; }
.vbtn.on { background: #f0b58c; margin-left: 18px; }
.vbtn + .vbtn { margin-left: 6px; }
.zoomv { margin-left: 19px; width: 42px; white-space: nowrap; color: #444; margin-top: -3px; }
.zm { margin-left: 16px; width: 14px; font-size: 24px; line-height: 1; color: #555; font-weight: bold; margin-top: -3px; }
.slider { margin-left: 12px; width: 190px; height: 2px; background: #8f96a2; position: relative; margin-top: -3px; flex: none; }
.fill { position: absolute; left: 0; top: -1px; width: 86px; height: 3px; background: #ea9a68; }
.handle { position: absolute; left: 86px; top: -9px; width: 9px; height: 19px; background: #f2f2f2; border: 1px solid #8c8c8c; border-radius: 1px; }
.zp { margin-left: 9px; font-size: 25px; line-height: 1; color: #444; margin-top: -3px; }

/* taskbar */
.taskbar { flex: 0 0 58px; display: flex; align-items: flex-start; border-top: 2px solid #5a6472; border-bottom: 3px solid #0a0a0a;
  background: linear-gradient(90deg, #6f8097 0, #7a8da4 70px, #9fbdd4 160px, #a2c0d6 1409px, #8fa8bf 1425px, #7d93aa 1445px, #6e8198 1460px, #6e8198 100%); height: 58px; }
.orb { width: 46px; height: 48px; margin: 1px 0 0 13px; flex: none; }
.orb svg { width: 46px; height: 48px; }
.tb-btn { height: 53px; display: flex; align-items: center; justify-content: center; flex: none; }
.tb-btn svg { height: 48px; }
.tb-btn.open { border: 1px solid #dfe7ee; border-radius: 3px; background: linear-gradient(#ffffff66, #ffffff22); box-shadow: 0 0 1px #4a5a6a; }
.b-folder { width: 82px; margin-left: 24px; }
.b-folder svg { width: 46px; }
.b-chrome { width: 94px; }
.b-chrome svg { width: 44px; }
.b-vm { width: 76px; }
.b-vm svg { width: 40px; }
.tb-sep { width: 4px; height: 53px; margin: 0 5px 0 5px; border: 1px solid #c4d3e0; border-radius: 1px; flex: none; }
.b-wps { width: 83px; justify-content: flex-start; padding-left: 18px; background: linear-gradient(#ffffffaa, #ffffff66) !important; }
.b-wps svg { width: 42px; height: 42px; }
.tray { margin-left: auto; display: flex; align-items: center; height: 53px; flex: none; width: 431px; color: #e6ecf2; }
.ch { font: bold 15px "Liberation Mono", monospace; width: 18px; margin-top: -4px; }
.tri { flex: none; }
.t-kb { width: 22px; height: 20px; margin-left: 12px; }
.t-help { width: 22px; height: 22px; margin-left: 9px; }
.t-switch { margin-left: 15px; width: 14px; display: flex; flex-direction: column; align-items: center; gap: 7px; }
.t-switch svg { width: 14px; height: 12px; }
.t-dn { border: 4px solid transparent; border-top: 5px solid #e6ecf2; border-bottom: 0; }
.t-up { margin-left: 15px; border: 6px solid transparent; border-bottom: 6px solid #f0f4f8; border-top: 0; }
.t-flag { width: 24px; height: 26px; margin-left: 56px; }
.t-plug { width: 22px; height: 26px; margin-left: 12px; }
.t-net { width: 24px; height: 26px; margin-left: 11px; }
.t-vol { width: 22px; height: 24px; margin-left: 11px; }
.clock { margin-left: 24px; display: flex; flex-direction: column; align-items: center; font-size: 18.500px; line-height: 24px; color: #dfe6ee; white-space: nowrap; padding-top: 1px; flex: none; }

/* watermark */
.firefly { position: absolute; left: 1625px; top: 60px; width: 150px; height: 170px; }
.bulb { display: block; width: 140px; height: 120px; filter: drop-shadow(1px 1px 1px #777); }
.ff-text { position: absolute; left: 3px; top: 105px; font: 700 42px "Lato", sans-serif; color: #fff; letter-spacing: 1.5px; text-shadow: 2px 3px 3px #666; transform: rotate(5deg); transform-origin: 0 50%; white-space: nowrap; }
```
